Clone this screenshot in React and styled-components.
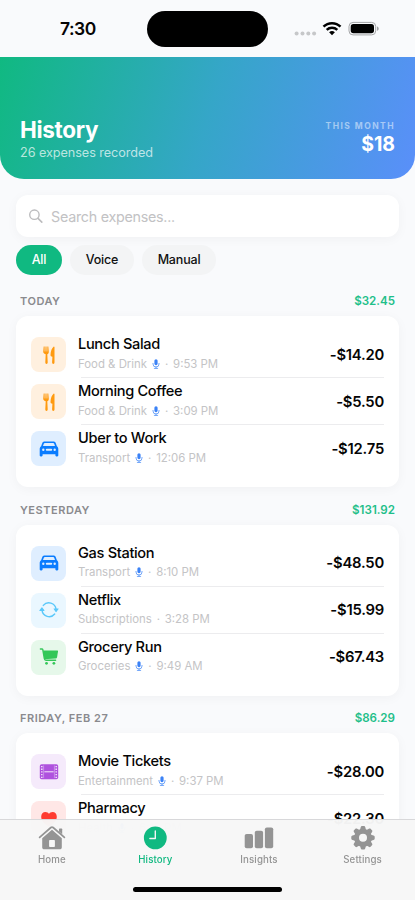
import React from "react";
import styled, { createGlobalStyle } from "styled-components";

const GlobalStyle = createGlobalStyle`
  * {
    box-sizing: border-box;
  }
  body {
    margin: 0;
    background: #f9fafc;
    font-family: Inter, "Liberation Sans", sans-serif;
    color: #050505;
    overflow: hidden;
  }
  svg {
    display: block;
  }
`;

const categories = {
  food: { label: "Food & Drink", tint: "#fff0df" },
  transport: { label: "Transport", tint: "#dfeeff" },
  subscriptions: { label: "Subscriptions", tint: "#eaf7ff" },
  groceries: { label: "Groceries", tint: "#e6f8ea" },
  entertainment: { label: "Entertainment", tint: "#f5eafb" },
  health: { label: "Health", tint: "#ffe7e6" },
};

const sections = [
  {
    day: "TODAY",
    total: "$32.45",
    items: [
      { title: "Lunch Salad", category: "food", voice: true, time: "9:53 PM", amount: "-$14.20" },
      { title: "Morning Coffee", category: "food", voice: true, time: "3:09 PM", amount: "-$5.50" },
      { title: "Uber to Work", category: "transport", voice: true, time: "12:06 PM", amount: "-$12.75" },
    ],
  },
  {
    day: "YESTERDAY",
    total: "$131.92",
    items: [
      { title: "Gas Station", category: "transport", voice: true, time: "8:10 PM", amount: "-$48.50" },
      { title: "Netflix", category: "subscriptions", voice: false, time: "3:28 PM", amount: "-$15.99" },
      { title: "Grocery Run", category: "groceries", voice: true, time: "9:49 AM", amount: "-$67.43" },
    ],
  },
  {
    day: "FRIDAY, FEB 27",
    total: "$86.29",
    items: [
      { title: "Movie Tickets", category: "entertainment", voice: true, time: "9:37 PM", amount: "-$28.00" },
      { title: "Pharmacy", category: "health", voice: true, time: "6:15 PM", amount: "-$22.30" },
    ],
  },
];

function App() {
  return (
    <Screen>
      <GlobalStyle />
      <StatusBar>
        <Clock>7:30</Clock>
        <Island />
        <StatusIcons />
      </StatusBar>
      <Header>
        <div>
          <h1>History</h1>
          <p>26 expenses recorded</p>
        </div>
        <Month>
          <span>THIS MONTH</span>
          <strong>$18</strong>
        </Month>
      </Header>
      <Content>
        <Search>
          <SearchIcon />
          <span>Search expenses...</span>
        </Search>
        <Chips>
          <Chip $active $width={46}>All</Chip>
          <Chip $width={64}>Voice</Chip>
          <Chip $width={74}>Manual</Chip>
        </Chips>
        {sections.map((section) => (
          <Section key={section.day}>
            <SectionHead>
              <Day>{section.day}</Day>
              <Total>{section.total}</Total>
            </SectionHead>
            <Card>
              {section.items.map((item) => (
                <Expense key={item.title} {...item} />
              ))}
            </Card>
          </Section>
        ))}
      </Content>
      <TabBar>
        <Tab>
          <HomeIcon />
          <span>Home</span>
        </Tab>
        <Tab $active>
          <ClockIcon />
          <span>History</span>
        </Tab>
        <Tab>
          <BarsIcon />
          <span>Insights</span>
        </Tab>
        <Tab>
          <GearIcon />
          <span>Settings</span>
        </Tab>
        <HomeIndicator />
      </TabBar>
    </Screen>
  );
}

const Expense = ({ title, category, voice, time, amount }) => {
  const { label, tint } = categories[category];
  return (
    <Row>
      <Badge $tint={tint}>
        <CategoryIcon name={category} />
      </Badge>
      <Body>
        <Info>
          <Title>{title}</Title>
          <Meta>
            <span>{label}</span>
            {voice && <MicIcon />}
            <Dot>·</Dot>
            <span>{time}</span>
          </Meta>
        </Info>
        <Amount>{amount}</Amount>
      </Body>
    </Row>
  );
};

const CategoryIcon = ({ name }) => {
  switch (name) {
    case "food":
      return (
        <svg width="20" height="20" viewBox="0 0 20 20" fill="#ff9a0f">
          <path d="M4.700 1.600h.9l.1 4.800h.6l.2-4.800h1l.2 4.800h.6l.1-4.800h.9l.5 5.400c0 1.300-.7 2-1.500 2.300l.4 8c0 1-.5 1.600-1.200 1.600s-1.200-.6-1.200-1.600l.4-8C5.900 9 4.200 8.300 4.200 7z" />
          <path d="M14.800 1.500c.4 0 .7.300.7.700v15c0 1.100-.5 1.700-1.200 1.700s-1.200-.6-1.200-1.700l.3-5.500c-1.200-.3-1.900-.8-1.900-1.800.1-3.600 1.400-7 3.300-8.400z" />
        </svg>
      );
    case "transport":
      return (
        <svg width="20" height="20" viewBox="0 0 20 20" fill="#0a7cff">
          <path
            fillRule="evenodd"
            d="M5.600 2.500h8.800c1.100 0 1.900.5 2.300 1.500l1.200 3.200c.9.700 1.400 1.600 1.400 2.800v6.300c0 .7-.4 1.100-1 1.100h-.9c-.6 0-1-.4-1-1.100v-1.100H3.600v1.100c0 .7-.4 1.100-1 1.100h-.9c-.6 0-1-.4-1-1.100V10c0-1.200.5-2.100 1.400-2.800L3.300 4c.4-1 1.200-1.500 2.300-1.500zM5.900 4c-.6 0-.9.200-1.100.8L4 7h12l-.8-2.200c-.2-.6-.5-.8-1.100-.8zM4.300 9.500a1.200 1.200 0 1 0 0 2.400 1.200 1.200 0 0 0 0-2.400zm11.400 0a1.200 1.200 0 1 0 0 2.400 1.200 1.200 0 0 0 0-2.400zM7.800 9.700a1 1 0 0 0 0 2h4.400a1 1 0 0 0 0-2z"
          />
        </svg>
      );
    case "subscriptions":
      return (
        <svg width="20" height="20" viewBox="0 0 20 20" fill="#5ac8fa">
          <g fill="none" stroke="#5ac8fa" strokeWidth="1.400" strokeLinecap="round">
            <path d="M4.300 5.400A7.200 7.200 0 0 1 17 9.200" />
            <path d="M15.700 14A7.200 7.200 0 0 1 3 10.200" />
          </g>
          <path d="M14.900 8.500h4.400c.4 0 .5.300.3.600l-2.200 2.900c-.2.200-.5.200-.7 0l-2.100-2.900c-.2-.3-.1-.6.300-.6zM5.100 10.900H.7c-.4 0-.5-.3-.3-.6l2.200-2.900c.2-.2.500-.2.700 0l2.100 2.900c.2.300.1.600-.3.600z" />
        </svg>
      );
    case "groceries":
      return (
        <svg width="20" height="20" viewBox="0 0 20 20" fill="#34c759">
          <path d="M4.100 3.500h14c.7 0 1 .4.900 1.100l-.9 5.300c-.2 1-.8 1.500-1.800 1.600l-10.900.8z" />
          <path
            d="M1.400 2h1.500c.5 0 .8.200.9.700l1.500 8.800c.2 1.100.6 1.700 1.600 1.700h9.700"
            fill="none"
            stroke="#34c759"
            strokeWidth="1.400"
            strokeLinecap="round"
          />
          <circle cx="7.500" cy="16.300" r="1.400" />
          <circle cx="14.900" cy="16.300" r="1.400" />
        </svg>
      );
    case "entertainment":
      return (
        <svg width="20" height="20" viewBox="0 0 20 20">
          <rect x=".8" y="2.300" width="18.400" height="15" rx="1.800" fill="#af52de" />
          <path d="M5.400 9.800h9.200" stroke="#f5eafb" strokeWidth="1" />
          <g stroke="#f5eafb" strokeWidth="1.400" strokeDasharray="1.300 1.400">
            <path d="M2.800 3.900v12.500M17.200 3.900v12.500" />
          </g>
          <path d="M4.600 3.500v12.600M15.400 3.500v12.600" stroke="#f5eafb" strokeWidth=".4" />
        </svg>
      );
    default:
      return (
        <svg width="20" height="20" viewBox="0 0 20 20" fill="#ff3b30">
          <path d="M10 17.800C5.500 15 2.200 11.500 2.200 7.700c0-2.700 1.800-4.600 4.200-4.600 1.600 0 2.900.7 3.600 1.900.7-1.200 2-1.900 3.600-1.900 2.400 0 4.200 1.900 4.200 4.600 0 3.800-3.300 7.300-7.800 10.100z" />
        </svg>
      );
  }
};

const MicIcon = () => (
  <svg width="8" height="10" viewBox="0 0 8 10">
    <rect x="2.400" y=".2" width="3.200" height="6" rx="1.600" fill="#3b82f6" />
    <path
      d="M1 4.400v.6a3 3 0 0 0 6 0v-.6M4 8v1.400M2.300 9.400h3.400"
      fill="none"
      stroke="#5b97f8"
      strokeWidth=".85"
      strokeLinecap="round"
    />
  </svg>
);

const SearchIcon = () => (
  <svg width="14" height="14" viewBox="0 0 14 14" fill="none" stroke="#bcbcbe" strokeLinecap="round">
    <circle cx="5.400" cy="5.700" r="4.700" strokeWidth="1.400" />
    <path d="M9 9.400l3.800 3.700" strokeWidth="1.600" />
  </svg>
);

const HomeIcon = () => (
  <svg width="28" height="25" viewBox="0 0 28 25" fill="currentColor">
    <path
      d="M1.600 12.400L12.900 2.500c.7-.6 1.500-.6 2.200 0l11.300 9.900"
      fill="none"
      stroke="currentColor"
      strokeWidth="1.700"
      strokeLinecap="round"
    />
    <path d="M21 4.200c0-.5.200-.7.700-.7h1.800c.5 0 .7.200.7.700v5.100L21 6.500z" />
    <path
      fillRule="evenodd"
      d="M14 4.700l9.800 8.600v8.900c0 1.400-.8 2.100-2.100 2.100H6.300c-1.300 0-2.100-.7-2.100-2.100v-8.900zM11.900 15c-.5 0-.8.300-.8.800v5.500c0 .5.300.8.800.8h4.200c.5 0 .8-.3.800-.8v-5.500c0-.5-.3-.8-.8-.8z"
    />
  </svg>
);

const ClockIcon = () => (
  <svg width="28" height="25" viewBox="0 0 28 25">
    <circle cx="14.300" cy="12.900" r="11.400" fill="currentColor" />
    <path
      d="M14.300 5.900v7.600H8.900"
      fill="none"
      stroke="#f4f5f5"
      strokeWidth="1.400"
      strokeLinecap="round"
      strokeLinejoin="round"
    />
  </svg>
);

const BarsIcon = () => (
  <svg width="30" height="25" viewBox="0 0 30 25" fill="currentColor">
    <rect x=".7" y="8.900" width="8.300" height="14.300" rx="1.900" />
    <rect x="10.800" y="5.700" width="8.300" height="17.500" rx="1.900" />
    <rect x="20.900" y="2.400" width="8.300" height="20.800" rx="1.900" />
  </svg>
);

// eight rounded teeth around a ring
const GearIcon = () => (
  <svg width="28" height="25" viewBox="0 0 28 25">
    <g transform="translate(14 12.800)" fill="currentColor">
      {[0, 45, 90, 135, 180, 225, 270, 315].map((deg) => (
        <path key={deg} transform={`rotate(${deg})`} d="M-3.200-7l.9-3.500c.2-.8.700-1.200 1.300-1.200h2c.6 0 1.100.4 1.300 1.200L3.200-7z" />
      ))}
      <circle r="6.500" fill="none" stroke="currentColor" strokeWidth="5" />
    </g>
  </svg>
);

const StatusIcons = () => (
  <svg width="86" height="16" viewBox="0 0 86 16">
    <g fill="#c6c7c9">
      <circle cx="2.600" cy="12.400" r="2" />
      <circle cx="8.500" cy="12.400" r="2" />
      <circle cx="14.300" cy="12.400" r="2" />
      <circle cx="20.100" cy="12.400" r="2" />
    </g>
    <g fill="none" stroke="#000" strokeWidth="2.500">
      <path d="M29.500 5.700a12.100 12.100 0 0 1 17 0" />
      <path d="M32.700 8.800a7.700 7.700 0 0 1 10.600 0" />
    </g>
    <path d="M35.100 11.200a4.300 4.300 0 0 1 5.800 0l-2.900 3z" />
    <rect x="55" y="1.400" width="26.700" height="12.500" rx="4" fill="none" stroke="#a4a5a7" strokeWidth="1" />
    <rect x="56.700" y="3" width="23.300" height="9.300" rx="2.700" />
    <path d="M83.200 5.500v4.300c.8-.3 1.400-1.100 1.400-2.100s-.6-1.900-1.400-2.200z" fill="#8e8f91" />
  </svg>
);

const Screen = styled.div`
  width: 415px;
  height: 900px;
  overflow: hidden;
  position: relative;
  display: flex;
  flex-direction: column;
`;

const StatusBar = styled.div`
  height: 57px;
  flex: none;
  display: grid;
  grid-template-columns: 147px 121px 1fr;
  align-items: center;
  > svg {
    margin-left: 26px;
  }
`;

const Clock = styled.div`
  padding-left: 60px;
  font-size: 17.500px;
  font-weight: 600;
  letter-spacing: -0.5px;
`;

const Island = styled.div`
  height: 36px;
  border-radius: 18px;
  background: #000;
`;

const Header = styled.header`
  height: 122px;
  flex: none;
  padding: 0 20px 17.500px;
  display: flex;
  justify-content: space-between;
  align-items: flex-end;
  color: white;
  border-radius: 0 0 24px 24px;
  background: linear-gradient(106.400deg, #10b981 0%, #35a6c8 50%, #5a8ffa 100%);
  h1 {
    margin: 0;
    font-size: 22.500px;
    line-height: 28px;
    font-weight: 700;
    letter-spacing: -0.3px;
  }
  p {
    margin: 0;
    font-size: 12.700px;
    line-height: 18px;
    letter-spacing: -0.080px;
    color: rgba(255, 255, 255, 0.7);
  }
`;

const Month = styled.div`
  display: flex;
  flex-direction: column;
  align-items: flex-end;
  padding-bottom: 4.500px;
  span {
    font-size: 8.500px;
    line-height: 12px;
    font-weight: 700;
    letter-spacing: 1.450px;
    color: rgba(255, 255, 255, 0.5);
  }
  strong {
    font-size: 19.500px;
    line-height: 25px;
    font-weight: 700;
  }
`;

const Content = styled.main`
  padding: 16px 16px 0;
`;

const Search = styled.div`
  height: 42px;
  padding: 0 13px;
  display: flex;
  align-items: center;
  gap: 8px;
  background: white;
  border-radius: 12px;
  box-shadow: 0 2px 12px rgba(0, 0, 0, 0.04);
  font-size: 14.300px;
  letter-spacing: -0.260px;
  color: #c2c2c4;
`;

const Chips = styled.div`
  display: flex;
  gap: 8px;
  margin-top: 7.500px;
`;

const Chip = styled.div`
  width: ${(props) => props.$width}px;
  height: 30.500px;
  line-height: 30.500px;
  border-radius: 16px;
  text-align: center;
  font-size: 12.500px;
  font-weight: 500;
  letter-spacing: -0.180px;
  background: ${(props) => (props.$active ? "#10b981" : "#f3f4f5")};
  color: ${(props) => (props.$active ? "white" : "#111")};
`;

const Section = styled.section`
  margin-top: 16px;
  & + & {
    margin-top: 12.100px;
  }
`;

const SectionHead = styled.div`
  display: flex;
  justify-content: space-between;
  align-items: center;
  height: 20.200px;
  margin-bottom: 5.200px;
  padding: 0 4px;
`;

const Day = styled.span`
  font-size: 11px;
  font-weight: 600;
  letter-spacing: 0.520px;
  color: #8a8a8e;
`;

const Total = styled.span`
  font-size: 11.600px;
  font-weight: 600;
  color: #1fbf8a;
`;

const Card = styled.div`
  padding: 15px;
  background: white;
  border-radius: 12px;
  box-shadow: 0 2px 12px rgba(0, 0, 0, 0.04);
`;

const Body = styled.div`
  flex: 1;
  height: 47px;
  display: flex;
  align-items: center;
  justify-content: space-between;
  /* hairline starts slightly right of the text */
  background: linear-gradient(#ececee, #ececee) 100% 100% / calc(100% - 3px) 1px no-repeat;
`;

const Row = styled.div`
  display: flex;
  align-items: center;
  gap: 12px;
  &:last-child ${Body} {
    background: none;
  }
`;

const Badge = styled.div`
  width: 35px;
  height: 35px;
  flex: none;
  display: flex;
  align-items: center;
  justify-content: center;
  border-radius: 8px;
  background: ${(props) => props.$tint};
`;

const Info = styled.div`
  padding-bottom: 2px;
`;

const Title = styled.div`
  font-size: 14.600px;
  line-height: 20px;
  font-weight: 500;
  letter-spacing: -0.330px;
`;

const Meta = styled.div`
  display: flex;
  align-items: center;
  height: 19px;
  font-size: 11.400px;
  color: #c4c4c6;
  svg {
    margin-left: 5px;
  }
`;

const Dot = styled.span`
  width: 13px;
  text-align: center;
`;

const Amount = styled.div`
  font-size: 14.800px;
  font-weight: 600;
  letter-spacing: -0.220px;
`;

const TabBar = styled.nav`
  position: absolute;
  left: 0;
  right: 0;
  bottom: 0;
  height: 81px;
  padding-top: 5px;
  display: grid;
  grid-template-columns: repeat(4, 103.600px);
  align-items: start;
  justify-items: center;
  border-top: 1px solid #d8d8da;
  background: rgba(246, 246, 246, 0.94);
  backdrop-filter: blur(20px);
`;

const Tab = styled.div`
  display: flex;
  flex-direction: column;
  align-items: center;
  color: ${(props) => (props.$active ? "#10b981" : "#949494")};
  span {
    margin-top: 4px;
    font-size: 9.700px;
    line-height: 12px;
    font-weight: 500;
    letter-spacing: 0.120px;
  }
`;

const HomeIndicator = styled.div`
  position: absolute;
  left: 133px;
  bottom: 8px;
  width: 149px;
  height: 5px;
  border-radius: 3px;
  background: #000;
`;

export default App;
